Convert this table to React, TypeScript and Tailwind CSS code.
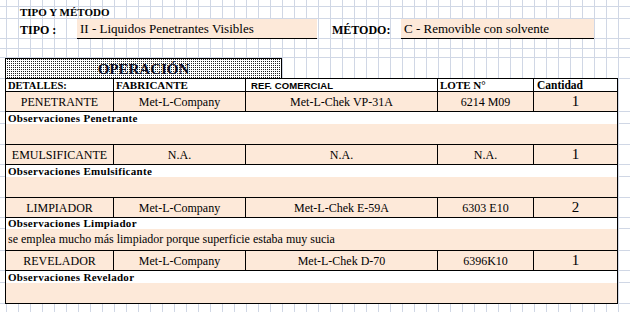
import React from "react";

type Item = {
  det: string;
  fab: string;
  ref: string;
  lote: string;
  cant: string;
  obsLabel: string;
  obs: string;
  contentH: string;
  labelH: string;
};

const items: Item[] = [
  {
    det: "PENETRANTE",
    fab: "Met-L-Company",
    ref: "Met-L-Chek VP-31A",
    lote: "6214 M09",
    cant: "1",
    obsLabel: "Observaciones Penetrante",
    obs: "",
    labelH: "h-[12px]",
    contentH: "h-[21px]",
  },
  {
    det: "EMULSIFICANTE",
    fab: "N.A.",
    ref: "N.A.",
    lote: "N.A.",
    cant: "1",
    obsLabel: "Observaciones Emulsificante",
    obs: "",
    labelH: "h-[12px]",
    contentH: "h-[21px]",
  },
  {
    det: "LIMPIADOR",
    fab: "Met-L-Company",
    ref: "Met-L-Chek E-59A",
    lote: "6303 E10",
    cant: "2",
    obsLabel: "Observaciones Limpiador",
    obs: "se emplea mucho más limpiador porque superficie estaba muy sucia",
    labelH: "h-[11px]",
    contentH: "h-[22px]",
  },
  {
    det: "REVELADOR",
    fab: "Met-L-Company",
    ref: "Met-L-Chek D-70",
    lote: "6396K10",
    cant: "1",
    obsLabel: "Observaciones Revelador",
    obs: "",
    labelH: "h-[12px]",
    contentH: "h-[21px]",
  },
];

function Spacers({ children, h, top }: { children: React.ReactNode; h: string; top?: boolean }) {
  const gl = top ? "border-t border-[#d0d7e5]" : "border-b border-[#d0d7e5]";
  return (
    <div className={`flex ${h}`}>
      <div className={`w-[5px] shrink-0 ${gl}`} />
      {children}
      <div className={`flex-1 ${gl}`} />
    </div>
  );
}

export default function App() {
  return (
    <div className="w-[630px] h-[312px] overflow-hidden bg-white bg-[linear-gradient(to_right,#d0d7e5_1px,transparent_1px)] bg-size-[12px_100%] bg-position-[6px_0] font-['Liberation_Serif','Times_New_Roman',serif] text-black">
      {/* row 0 */}
      <div className="h-[7px] border-b border-[#d0d7e5]" />
      {/* row 1 */}
      <div className="h-[12px] border-b border-[#d0d7e5] flex items-center pl-[20px]">
        <span className="text-[11px] leading-[11px] font-bold">TIPO Y MÉTODO</span>
      </div>
      {/* row 2 */}
      <div className="h-[20px] flex">
        <div className="w-[77px] shrink-0 border-b border-[#d0d7e5] flex items-end pb-[2px] pl-[20px]">
          <span className="text-[12px] leading-[12px] font-bold">TIPO :</span>
        </div>
        <div className="w-[240px] shrink-0 bg-[#fde9d9] border-b border-black flex items-center pl-[3px]">
          <span className="text-[13px] leading-[13px]">II - Liquidos Penetrantes Visibles</span>
        </div>
        <div className="w-[84px] shrink-0 border-b border-[#d0d7e5] flex items-end pb-[2px] pl-[15px]">
          <span className="text-[12px] leading-[12px] font-bold">MÉTODO:</span>
        </div>
        <div className="w-[193px] shrink-0 bg-[#fde9d9] border-b border-black flex items-center pl-[3px]">
          <span className="text-[13px] leading-[13px]">C - Removible con solvente</span>
        </div>
        <div className="flex-1 border-b border-[#d0d7e5]" />
      </div>
      {/* row 3, 4 */}
      <div className="h-[10px] border-b border-[#d0d7e5]" />
      <div className="h-[9px] border-b border-[#d0d7e5]" />
      {/* OPERACION row */}
      <div className="h-[20px] flex">
        <div className="w-[5px] shrink-0" />
        <div className="w-[277px] shrink-0 border-t border-l border-r border-black bg-white bg-[conic-gradient(#222_0_25%,transparent_0)] bg-size-[2px_2px] flex items-center justify-center">
          <span className="text-[15px] leading-[15px] font-bold text-[#0a0a20] mt-[1px]">OPERACIÓN</span>
        </div>
        <div className="flex-1" />
      </div>
      {/* header row */}
      <Spacers h="h-[14px]" top>
        <div className="w-[613px] shrink-0 flex border-t border-b border-l border-black bg-white font-bold text-[11px] leading-[11px]">
          <div className="w-[108px] shrink-0 border-r border-black flex items-center pl-[2px] text-[10.5px]">DETALLES:</div>
          <div className="w-[132px] shrink-0 border-r border-black flex items-center pl-[2px]">FABRICANTE</div>
          <div className="w-[192px] shrink-0 border-r border-black flex items-center pl-[5px] font-['Liberation_Sans',sans-serif] text-[9.5px] tracking-[0.1px]">REF. COMERCIAL</div>
          <div className="w-[96px] shrink-0 border-r border-black flex items-center pl-[2px]">LOTE N°</div>
          <div className="w-[84px] shrink-0 border-r border-black flex items-center pl-[3px] text-[11.5px]">Cantidad</div>
        </div>
      </Spacers>
      {items.map((it) => (
        <React.Fragment key={it.det}>
          <Spacers h="h-[20px]">
            <div className="w-[613px] shrink-0 flex border-b border-l border-black bg-[#fde9d9] text-[12px] leading-[12px]">
              <div className="w-[108px] shrink-0 border-r border-black flex items-center justify-center">{it.det}</div>
              <div className="w-[132px] shrink-0 border-r border-black flex items-center justify-center">{it.fab}</div>
              <div className="w-[192px] shrink-0 border-r border-black flex items-center justify-center">{it.ref}</div>
              <div className="w-[96px] shrink-0 border-r border-black flex items-center justify-center">{it.lote}</div>
              <div className="w-[84px] shrink-0 border-r border-black flex items-center justify-center text-[15px] leading-[15px]">{it.cant}</div>
            </div>
          </Spacers>
          <Spacers h={it.labelH}>
            <div className="w-[613px] shrink-0 flex items-center border-l border-r border-black bg-white pl-[2px]">
              <span className="text-[11px] leading-[11px] font-bold tracking-[0.3px]">{it.obsLabel}</span>
            </div>
          </Spacers>
          <Spacers h={it.contentH}>
            <div className="w-[613px] shrink-0 flex items-center border-l border-r border-b border-black bg-[#fde9d9] pl-[2px] pb-[2px]">
              <span className="text-[12px] leading-[12px]">{it.obs}</span>
            </div>
          </Spacers>
        </React.Fragment>
      ))}
    </div>
  );
}
